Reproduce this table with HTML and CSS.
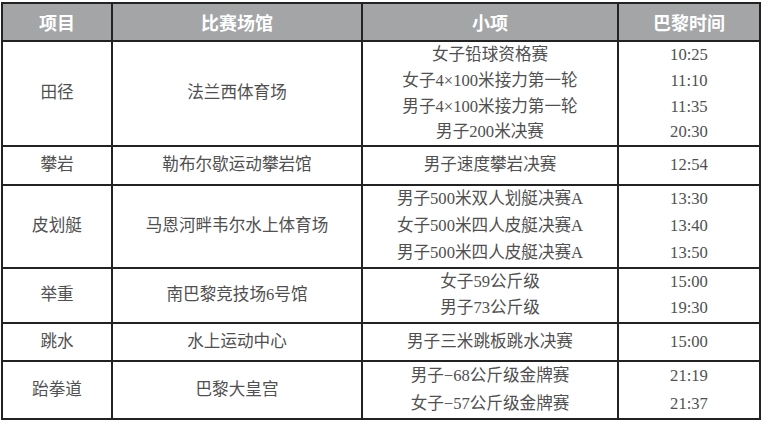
FILE: index.html
```html
<!DOCTYPE html>
<html lang="zh">
<head>
<meta charset="utf-8">
<link rel="stylesheet" href="styles.css">
</head>
<body>
<table class="sched">
  <colgroup>
    <col class="c1"><col class="c2"><col class="c3"><col class="c4">
  </colgroup>
  <thead>
    <tr class="head"><th>项目</th><th>比赛场馆</th><th>小项</th><th>巴黎时间</th></tr>
  </thead>
  <tbody>
    <tr class="sub first"><td rowspan="4" class="grp">田径</td><td rowspan="4" class="grp">法兰西体育场</td><td>女子铅球资格赛</td><td>10:25</td></tr>
    <tr class="sub"><td>女子4×100米接力第一轮</td><td>11:10</td></tr>
    <tr class="sub"><td>男子4×100米接力第一轮</td><td>11:35</td></tr>
    <tr class="sub last short"><td>男子200米决赛</td><td>20:30</td></tr>

    <tr class="single"><td class="grp">攀岩</td><td class="grp">勒布尔歇运动攀岩馆</td><td class="grp">男子速度攀岩决赛</td><td class="grp">12:54</td></tr>

    <tr class="sub2 first"><td rowspan="3" class="grp">皮划艇</td><td rowspan="3" class="grp">马恩河畔韦尔水上体育场</td><td>男子500米双人划艇决赛A</td><td>13:30</td></tr>
    <tr class="sub2"><td>女子500米四人皮艇决赛A</td><td>13:40</td></tr>
    <tr class="sub2 last"><td>男子500米四人皮艇决赛A</td><td>13:50</td></tr>

    <tr class="sub3 first"><td rowspan="2" class="grp">举重</td><td rowspan="2" class="grp">南巴黎竞技场6号馆</td><td>女子59公斤级</td><td>15:00</td></tr>
    <tr class="sub3 last"><td>男子73公斤级</td><td>19:30</td></tr>

    <tr class="single2"><td class="grp">跳水</td><td class="grp">水上运动中心</td><td class="grp">男子三米跳板跳水决赛</td><td class="grp">15:00</td></tr>

    <tr class="sub4 first"><td rowspan="2" class="grp">跆拳道</td><td rowspan="2" class="grp">巴黎大皇宫</td><td>男子−68公斤级金牌赛</td><td>21:19</td></tr>
    <tr class="sub4 last"><td>女子−57公斤级金牌赛</td><td>21:37</td></tr>
  </tbody>
</table>
</body>
</html>
```
FILE: styles.css
```css
html, body {
  margin: 0;
  padding: 0;
  background: #ffffff;
}
body {
  padding: 2px 0 0 1px;
}
.sched {
  border-collapse: collapse;
  table-layout: fixed;
  width: 758px;
  font-family: "Liberation Serif", "Noto Sans CJK SC", serif;
  font-size: 16.6px;
  color: #505050;
}
.c1 { width: 110px; }
.c2 { width: 250px; }
.c3 { width: 256px; }
.c4 { width: 142px; }
.sched th {
  background: #a3a5a7;
  color: #ffffff;
  font-family: "Noto Sans CJK SC", sans-serif;
  font-weight: 700;
  font-size: 18px;
  height: 36px;
  padding: 0;
  border: 2px solid #222222;
  text-align: center;
  vertical-align: middle;
  line-height: 1;
}
.sched td {
  padding: 0;
  text-align: center;
  vertical-align: middle;
  border-left: 2px solid #222222;
  border-right: 2px solid #222222;
  line-height: 1;
}
.sched td.grp {
  border-top: 2px solid #222222;
  border-bottom: 2px solid #222222;
}
.sched tr.first td { border-top: 2px solid #222222; }
.sched tr.last td { border-bottom: 2px solid #222222; }
.sub td { height: 26px; }
.sub.short td { height: 25px; }
.single td { height: 37px; }
.sub2 td { height: 27px; }
.sub3 td { height: 26.5px; }
.single2 td { height: 36px; }
.sub4 td { height: 28px; }
```
